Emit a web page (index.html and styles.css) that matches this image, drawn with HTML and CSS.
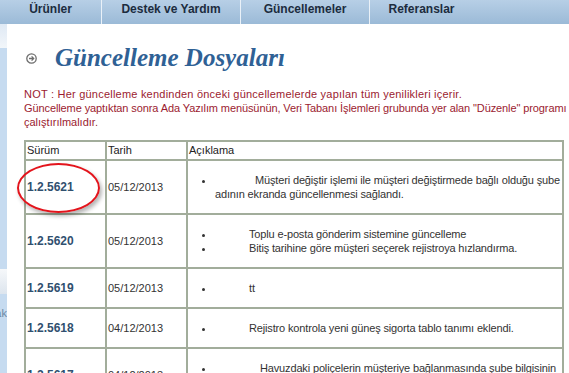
FILE: index.html
```html
<!DOCTYPE html>
<html lang="tr">
<head>
  <meta charset="UTF-8" />
  <title>Güncellemeler - Ada Yazılım</title>
  <link rel="stylesheet" href="styles.css">
</head>
<body>
  <nav class="topnav">
    <ul>
      <li class="nav-products">Ürünler</li>
      <li class="nav-support">Destek ve Yardım</li>
      <li class="nav-updates">Güncellemeler</li>
      <li class="nav-refs">Referanslar</li>
    </ul>
  </nav>

  <div class="page">
    <aside class="sidebar">
      <div class="side-top"></div>
      <div class="side-box side-main"></div>
      <div class="side-gap"></div>
      <div class="side-box side-links"><span>Bırak</span></div>
    </aside>

    <main class="content">
      <h1 class="title">
        <svg class="title-icon" viewBox="0 0 11 11" width="11" height="11">
          <circle cx="5.5" cy="5.5" r="4.7" fill="none" stroke="#6d6d6d" stroke-width="1.3"/>
          <path d="M3 5.5h4.6M5.6 3.4l2.1 2.1-2.1 2.1" fill="none" stroke="#6d6d6d" stroke-width="1.3"/>
        </svg>
        Güncelleme Dosyaları
      </h1>

      <p class="note">
        <span class="note-line">NOT : Her güncelleme kendinden önceki güncellemelerde yapılan tüm yenilikleri içerir.</span>
        <span class="note-line">Güncelleme yaptıktan sonra Ada Yazılım menüsünün, Veri Tabanı İşlemleri grubunda yer alan "Düzenle" programı</span>
        <span class="note-line">çalıştırılmalıdır.</span>
      </p>

      <table class="updates">
        <thead>
          <tr>
            <th class="col-version">Sürüm</th>
            <th class="col-date">Tarih</th>
            <th>Açıklama</th>
          </tr>
        </thead>
        <tbody>
          <tr>
            <td class="version">1.2.5621</td>
            <td>05/12/2013</td>
            <td>
              <ul class="desc indent-m">
                <li>Müşteri değiştir işlemi ile müşteri değiştirmede bağlı olduğu şube adının ekranda güncellenmesi sağlandı.</li>
              </ul>
            </td>
          </tr>
          <tr>
            <td class="version">1.2.5620</td>
            <td>05/12/2013</td>
            <td>
              <ul class="desc indent-s">
                <li>Toplu e-posta gönderim sistemine güncelleme</li>
                <li>Bitiş tarihine göre müşteri seçerek rejistroya hızlandırma.</li>
              </ul>
            </td>
          </tr>
          <tr>
            <td class="version">1.2.5619</td>
            <td>05/12/2013</td>
            <td>
              <ul class="desc indent-s">
                <li>tt</li>
              </ul>
            </td>
          </tr>
          <tr>
            <td class="version">1.2.5618</td>
            <td>04/12/2013</td>
            <td>
              <ul class="desc indent-s">
                <li>Rejistro kontrola yeni güneş sigorta tablo tanımı eklendi.</li>
              </ul>
            </td>
          </tr>
          <tr>
            <td class="version">1.2.5617</td>
            <td>04/12/2013</td>
            <td>
              <ul class="desc indent-l">
                <li>Havuzdaki poliçelerin müşteriye bağlanmasında şube bilgisinin güncellenmesi sağlandı.</li>
              </ul>
            </td>
          </tr>
        </tbody>
      </table>
    </main>
  </div>

  <div class="callout"></div>
</body>
</html>
```

FILE: styles.css
```css
body {
  margin: 0;
  padding: 0;
  background: #fff;
  font-family: "Liberation Sans", Arial, sans-serif;
  overflow: hidden;
}

/* top menu */
.topnav {
  height: 24px;
  background: linear-gradient(#b7cfe6, #9bbad7);
}

.topnav ul {
  list-style: none;
  margin: 0;
  padding: 0;
  display: flex;
  height: 100%;
}

.topnav li {
  box-sizing: border-box;
  padding-top: 2px;
  font-size: 12px;
  font-weight: bold;
  line-height: 15px;
  color: #1c2c3e;
  text-align: center;
  border-right: 1px solid #eaf1f8;
}

.nav-products { width: 102px; }
.nav-support { width: 139px; }
.nav-updates { width: 129px; }
.nav-refs { width: 103px; border-right: none !important; }

/* page */
.page {
  display: flex;
}

.sidebar {
  width: 7px;
  flex: none;
  overflow: hidden;
}

.side-top {
  height: 24px;
  background: linear-gradient(#dfe9f4, #f2f6fa);
}

.side-box {
  background: #c6dbf0;
}

.side-main {
  height: 221px;
}

.side-gap {
  height: 25px;
  background: linear-gradient(#f6f8fa, #dde5ee);
}

.side-links {
  height: 100px;
  padding-top: 12px;
  font-size: 11px;
  line-height: 14px;
  color: #6c88a4;
  white-space: nowrap;
  display: flex;
  justify-content: flex-end;
}

.content {
  padding: 19px 0 0 17px;
  width: 541px;
}

.title {
  display: flex;
  align-items: center;
  margin: 0;
  height: 30px;
  font-family: "Liberation Serif", "Times New Roman", serif;
  font-style: italic;
  font-weight: bold;
  font-size: 25px;
  line-height: 30px;
  color: #2f6195;
}

.title-icon {
  flex: none;
  margin: 0 18px 0 2px;
}

.note {
  margin: 14px 0 11px;
  font-size: 11px;
  line-height: 14px;
  color: #9b1b30;
}

.note-line {
  display: block;
  white-space: nowrap;
}

.note-line:first-child {
  letter-spacing: 0.22px;
}

.note-line:nth-child(2) {
  letter-spacing: -0.1px;
}

/* update table */
.updates {
  width: 540px;
  table-layout: fixed;
  border-collapse: separate;
  border-spacing: 0;
  border-right: 2px solid #a2ad9b;
  border-bottom: 2px solid #a2ad9b;
  font-size: 11px;
  line-height: 14px;
  color: #333;
}

.updates th,
.updates td {
  box-sizing: border-box;
  padding: 1px;
  border-left: 2px solid #a2ad9b;
  border-top: 2px solid #a2ad9b;
  text-align: left;
  vertical-align: middle;
}

.updates th {
  font-weight: normal;
  line-height: 15px;
  color: #222;
}

.col-version,
.col-date {
  width: 81px;
}

.version {
  font-size: 12px;
  font-weight: bold;
  color: #30506f;
}

.desc {
  margin: 11px 0;
  padding-left: 26px;
  letter-spacing: -0.15px;
}

.indent-s { text-indent: 34px; }
.indent-m { text-indent: 40px; }
.indent-l { text-indent: 45px; }

/* red mark drawn over the first release */
.callout {
  position: absolute;
  left: 17px;
  top: 163px;
  width: 83px;
  height: 50px;
  box-sizing: border-box;
  border: 2px solid #e3141c;
  border-radius: 50%;
  box-shadow: 2px 3px 4px rgba(0, 0, 0, 0.3);
}
```
